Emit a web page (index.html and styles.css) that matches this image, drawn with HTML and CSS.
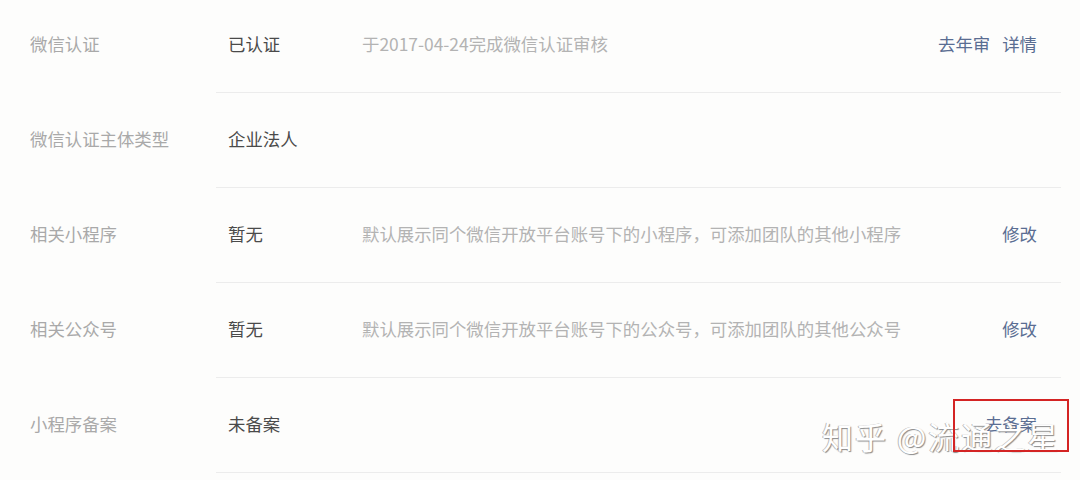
FILE: index.html
```html
<!DOCTYPE html>
<html>
<head>
<meta charset="utf-8">
<title>小程序设置</title>
<link rel="stylesheet" href="styles.css">
</head>
<body>

<div class="list">
	<div class="row">
		<div class="label">微信认证</div>
		<div class="body">
			<div class="value">已认证</div>
			<div class="desc">于2017-04-24完成微信认证审核</div>
			<div class="acts"><a>去年审</a><a>详情</a></div>
		</div>
	</div>
	<div class="row">
		<div class="label">微信认证主体类型</div>
		<div class="body">
			<div class="value">企业法人</div>
		</div>
	</div>
	<div class="row">
		<div class="label">相关小程序</div>
		<div class="body">
			<div class="value">暂无</div>
			<div class="desc">默认展示同个微信开放平台账号下的小程序，可添加团队的其他小程序</div>
			<div class="acts"><a>修改</a></div>
		</div>
	</div>
	<div class="row">
		<div class="label">相关公众号</div>
		<div class="body">
			<div class="value">暂无</div>
			<div class="desc">默认展示同个微信开放平台账号下的公众号，可添加团队的其他公众号</div>
			<div class="acts"><a>修改</a></div>
		</div>
	</div>
	<div class="row">
		<div class="label">小程序备案</div>
		<div class="body">
			<div class="value">未备案</div>
			<div class="desc"></div>
			<div class="acts"><a>去备案</a></div>
		</div>
	</div>
</div>

<!-- watermark + red box over last row -->
<div class="mark">知乎 @流通之星</div>
<div class="redbox"></div>

</body>
</html>
```

FILE: styles.css
```css
* {
font-family: "Noto Sans CJK SC", "Noto Sans", sans-serif;
box-sizing: border-box;
}
body {
margin: 0;
background: #fdfdfc;
position: relative;
height: 480px;
overflow: hidden;
}
.list {
margin-top: -2px;
}
.row {
display: flex;
height: 95px;
font-size: 17.4px;
}
.label {
width: 216px;
padding-left: 30px;
padding-bottom: 4px;
color: #a9a9a9;
display: flex;
align-items: center;
}
.body {
flex: 1;
margin-right: 19px;
padding-bottom: 3px;
display: flex;
align-items: center;
border-bottom: 1px solid #ececec;
}
.value {
width: 146px;
padding-left: 12px;
color: #4a4a4a;
}
.desc {
flex: 1;
color: #b3b3b3;
}
.acts {
padding-right: 24px;
display: flex;
gap: 12px;
}
.acts a {
color: #5a6d92;
}
.mark {
position: absolute;
left: 822px;
top: 413px;
font-size: 31px;
color: #fff;
text-shadow: 1px 1px 1px #8a8a8a, -1px 0 0 #bbb;
letter-spacing: 2px;
}
.redbox {
position: absolute;
left: 953px;
top: 399px;
width: 116px;
height: 53px;
border: 2px solid #d42424;
}
```
